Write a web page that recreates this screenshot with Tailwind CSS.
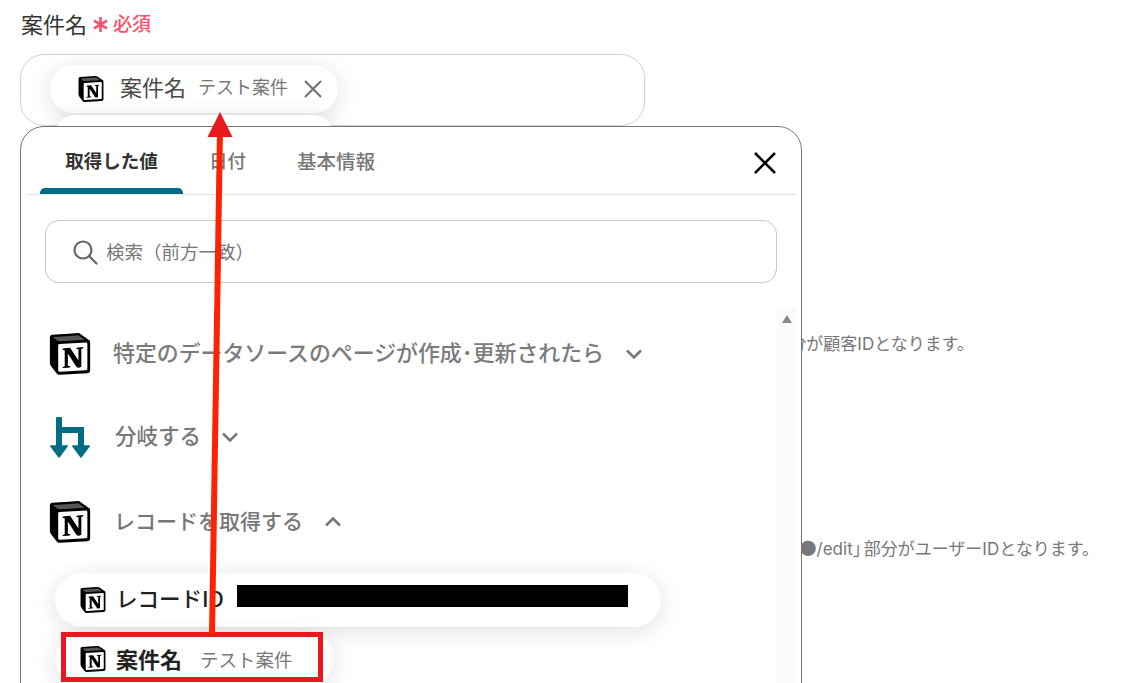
<!doctype html>
<html lang="ja">
  <head>
    <meta charset="UTF-8" />
    <meta name="viewport" content="width=device-width, initial-scale=1" />
    <title>案件名</title>
    <script src="https://cdn.jsdelivr.net/npm/@tailwindcss/browser@4"></script>
  </head>
  <body>
    <svg class="hidden">
      <symbol id="notion" viewBox="0 0 24 24">
        <path fill="#000" d="M1.900 1L15.300.1c1.500-.1 2.200 0 3 .7l4.300 3c.6.400.9.700.9 1.200v16.300c0 1-.4 1.600-1.700 1.700l-15.400.9c-1 .1-1.500-.1-2-.7l-3.100-4.100c-.5-.7-.8-1.300-.8-2V2.700C.5 1.800.9 1.100 1.900 1z" />
        <path fill="#555" d="M4.459 4.208c.746.606 1.026.56 2.428.466l13.215-.793c.28 0 .047-.28-.046-.326L17.860 1.968c-.42-.326-.981-.7-2.055-.607L3.010 2.295c-.466.046-.56.28-.374.466z" />
        <path fill="#fff" d="M5.252 7.288v13.904c0 .747.373 1.027 1.214.98l14.523-.84c.841-.046.935-.56.935-1.167V6.354c0-.606-.233-.933-.748-.887l-15.177.887c-.56.047-.747.327-.747.793z" />
        <path fill="#000" d="M19.589 8.033c.093.42 0 .84-.42.888l-.7.14v10.264c-.608.327-1.168.514-1.635.514-.748 0-.935-.234-1.495-.933l-4.577-7.186v6.952L12.210 19s0 .84-1.168.84l-3.222.186c-.093-.186 0-.653.327-.746l.84-.233V9.854L7.822 9.760c-.094-.42.14-1.026.793-1.073l3.456-.233 4.764 7.279v-6.44l-1.215-.139c-.093-.514.28-.887.747-.933z" />
      </symbol>
    </svg>

    <div class="relative h-[683px] w-[1122px] overflow-hidden bg-white font-['Noto_Sans_CJK_JP','Noto_Sans',sans-serif] text-[#333]">
      <!-- Text of the page behind the popup -->
      <p class="absolute right-[148px] top-[332px] font-['Inter','Noto_Sans_CJK_JP',sans-serif] text-[17px] leading-6 text-[#777]">部分が顧客IDとなります。</p>
      <p class="absolute right-[23px] top-[536px] font-['Inter','Noto_Sans_CJK_JP',sans-serif] text-[17px] leading-6 text-[#777]"><span class="font-['Noto_Sans_CJK_JP']">●</span>/edit<span class="tracking-[-6px]">」</span>部分がユーザーIDとなります。</p>

      <!-- Label -->
      <div class="flex h-[54px] items-start pl-[21px] pt-[7px]">
        <span class="text-[22px] leading-[32px]">案件名</span>
        <svg class="ml-[6px] mt-[10px] h-[15px] w-[15px]" viewBox="0 0 15 15" fill="none" stroke="#fb4f6b" stroke-width="2.600"><path d="M7.500 0v15M1 3.700l13 7.600M14 3.700L1 11.300" /></svg>
        <span class="ml-[5px] text-[19px] font-medium leading-[32px] text-[#fb4f6b]">必須</span>
      </div>

      <!-- Field -->
      <div class="ml-5 h-[72px] w-[625px] rounded-[24px] border border-[#cdd3da] pl-[29px] pt-[10px]">
        <div class="flex h-[48px] w-[288px] items-center rounded-full bg-white pb-[5px] pl-[28px] shadow-[0_4px_24px_rgba(0,0,0,0.13)]">
          <svg class="mt-[5px] h-[26px] w-[26px]"><use href="#notion" /></svg>
          <span class="ml-[16px] text-[22px] text-[#4a4a4a]">案件名</span>
          <span class="ml-[12px] text-[18px] text-[#777]">テスト案件</span>
          <svg class="ml-[15px] mt-[5px] h-[20px] w-[20px]" viewBox="0 0 20 20" fill="none" stroke="#6f6f6f" stroke-width="2"><path d="M2 2l16 16M18 2L2 18" /></svg>
        </div>
        <div class="ml-[5px] mt-[2px] h-[20px] w-[278px] rounded-t-[24px] bg-white shadow-[0_4px_24px_rgba(0,0,0,0.12)]"></div>
      </div>

      <!-- Popup -->
      <div class="absolute left-5 top-[126px] h-[620px] w-[782px] rounded-[24px] border border-[#777] bg-white">
        <div class="mx-[5px] flex h-[68px] items-center border-b border-[#e3e3e3] pl-[14px]">
          <div class="relative flex h-full w-[143px] items-center justify-center text-[18.500px] font-bold text-[#333]">
            取得した値
            <div class="absolute bottom-0 left-0 h-[6px] w-full rounded-t-[5px] bg-[#006d85]"></div>
          </div>
          <div class="ml-[26px] text-[18.500px] font-medium text-[#777]">日付</div>
          <div class="ml-[51px] text-[19.500px] font-medium text-[#777]">基本情報</div>
          <svg class="ml-auto mr-[19px] mt-[4px] h-[24px] w-[24px]" viewBox="0 0 24 24" fill="none" stroke="#000" stroke-width="2.500"><path d="M2 2l20 20M22 2L2 22" /></svg>
        </div>

        <div class="mx-6 mt-[25px] flex h-[63px] w-[732px] items-center rounded-[14px] border border-[#c8c8c8] pl-[26px]">
          <svg class="h-[26px] w-[26px]" viewBox="0 0 26 26" fill="none" stroke="#666" stroke-width="2.200"><circle cx="11" cy="11" r="8.500" /><path d="M17.500 17.500l7 7" stroke-linecap="round" /></svg>
          <span class="ml-[8px] text-[18.500px] text-[#777]">検索（前方一致）</span>
        </div>

        <!-- Scrollbar track -->
        <div class="absolute left-[756px] top-[181px] flex h-[440px] w-[19px] justify-center bg-[#fafafa] pt-[7px]">
          <svg class="h-[8px] w-[10px]" viewBox="0 0 10 8"><path fill="#888" d="M5 0l5 8H0z" /></svg>
        </div>

        <!-- Steps -->
        <div class="mt-[50px] flex h-[42px] items-center pl-[28px]">
          <svg class="h-[42px] w-[42px]"><use href="#notion" /></svg>
          <span class="ml-[22px] pb-[4px] text-[21.900px] font-medium text-[#7b7b7b]">特定のデータソースのページが作成･更新されたら</span>
          <svg class="ml-[22px] h-[10px] w-[16px]" viewBox="0 0 16 10" fill="none" stroke="#777" stroke-width="2.500"><path d="M1 1.500l7 7 7-7" /></svg>
        </div>
        <div class="mt-[42px] flex h-[40px] items-center pl-[29px]">
          <svg class="h-[41px] w-[40px]" viewBox="0 0 40 41" fill="#006d85">
            <path d="M6 2a3 3 0 0 1 6 0v8h22v20h-6V16H12v14H6z" />
            <path stroke="#006d85" stroke-width="1.500" stroke-linejoin="round" d="M.8 29h16.400L9 40zM22.800 29h16.400L31 40z" />
          </svg>
          <span class="ml-[25px] pb-[3px] text-[21.500px] font-medium text-[#777]">分岐する</span>
          <svg class="ml-[21px] h-[10px] w-[16px]" viewBox="0 0 16 10" fill="none" stroke="#777" stroke-width="2.500"><path d="M1 1.500l7 7 7-7" /></svg>
        </div>
        <div class="mt-[44px] flex h-[42px] items-center pl-[28px]">
          <svg class="h-[42px] w-[42px]"><use href="#notion" /></svg>
          <span class="ml-[23px] pb-[2px] text-[21px] font-medium text-[#777]">レコードを取得する</span>
          <svg class="ml-[22px] h-[10px] w-[16px]" viewBox="0 0 16 10" fill="none" stroke="#777" stroke-width="2.500"><path d="M1 8.500l7-7 7 7" /></svg>
        </div>

        <!-- Values -->
        <div class="ml-[34px] mt-[30px] flex h-[54px] w-[606px] items-center rounded-full bg-white pl-[25px] shadow-[0_4px_24px_rgba(0,0,0,0.12)]">
          <svg class="h-[26px] w-[26px]"><use href="#notion" /></svg>
          <span class="ml-[10px] pb-[3px] text-[21.500px] font-medium text-[#222]">レコードID</span>
          <div class="mb-[8px] ml-[13px] h-[22px] w-[391px] bg-black"></div>
        </div>
        <div class="ml-[34px] mt-[5px] flex h-[54px] w-[279px] items-center rounded-full bg-white pl-[25px] shadow-[0_4px_24px_rgba(0,0,0,0.12)]">
          <svg class="h-[26px] w-[26px]"><use href="#notion" /></svg>
          <span class="ml-[10px] pb-[2px] text-[22px] font-bold text-[#222]">案件名</span>
          <span class="ml-[18px] pt-[1px] text-[18.500px] text-[#777]">テスト案件</span>
        </div>
      </div>

      <!-- Annotation -->
      <div class="absolute left-[61px] top-[632px] h-[50px] w-[262px] border-[5px] border-[#e8191c]"></div>
      <svg class="absolute left-0 top-0 h-[683px] w-[1122px]" viewBox="0 0 1122 683">
        <path d="M212 634L220 130" stroke="#ff2200" stroke-width="6" fill="none" />
        <path d="M220 112L232.500 137H207.500z" fill="#e8191c" />
      </svg>
    </div>
  </body>
</html>
